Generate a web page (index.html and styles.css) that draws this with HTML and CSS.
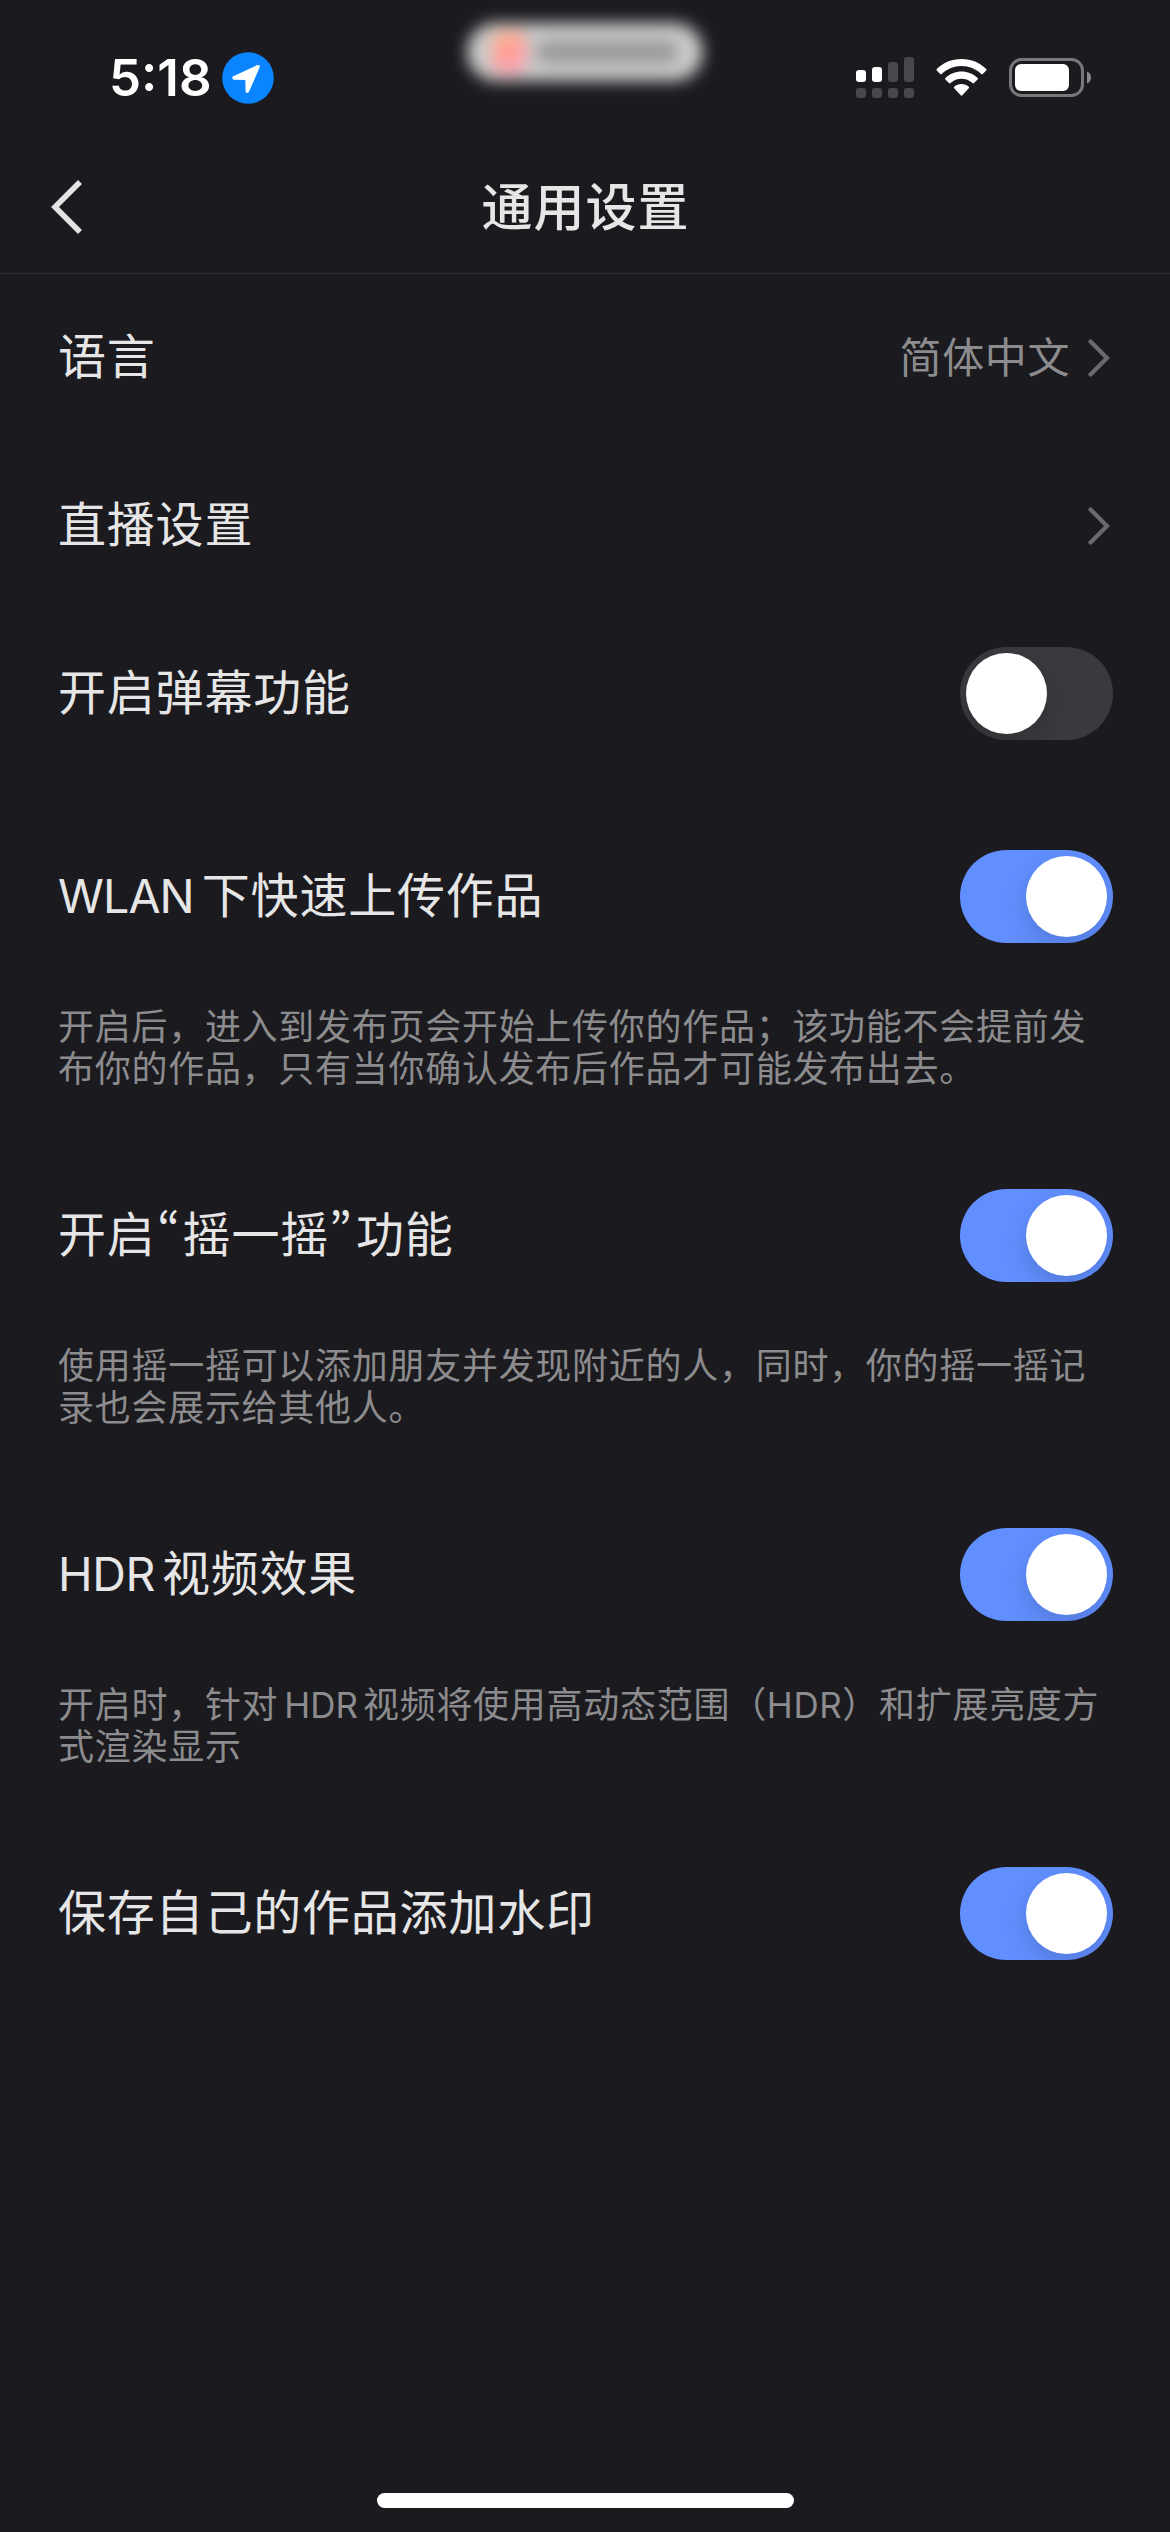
FILE: index.html
```html
<!DOCTYPE html>
<html lang="zh-CN">
<head>
<meta charset="utf-8">
<title>通用设置</title>
<link rel="stylesheet" href="styles.css">
</head>
<body>
<div class="screen">
  <header class="top">
    <div class="status">
      <div class="clock">
        <span class="time">5:18</span>
        <svg class="location" width="52" height="52" viewBox="0 0 52 52">
          <circle cx="26" cy="26" r="25.8" fill="#0a84ff"/>
          <path d="M11.6 25.2 L35.6 14 Q37 13.6 36.7 15 L26 39.6 Q25.200 40.300 24.600 39.600 L24.300 26.900 L12 26.800 Q10.900 26 11.600 25.200 Z" fill="#fff" stroke="#fff" stroke-width="2" stroke-linejoin="round"/>
        </svg>
      </div>
      <div class="island"><span class="island-icon"></span><span class="island-text"></span></div>
      <div class="indicators">
        <svg class="signal" width="58" height="42" viewBox="0 0 58 42">
          <g fill="#fff"><rect x="0" y="13" width="10" height="12" rx="3"/><rect x="16" y="10" width="10" height="15" rx="3"/></g>
          <g fill="#48474c"><rect x="32" y="5" width="10" height="20" rx="3"/><rect x="48" y="0" width="10" height="25" rx="3"/>
          <rect x="0" y="31" width="10" height="10" rx="3"/><rect x="16" y="31" width="10" height="10" rx="3"/><rect x="32" y="31" width="10" height="10" rx="3"/><rect x="48" y="31" width="10" height="10" rx="3"/></g>
        </svg>
        <svg class="wifi" width="51" height="38" viewBox="0 0 51 38">
          <g fill="#fff">
            <path d="M25.500 0 C35.500 0 43.600 3.700 50.200 9.900 Q51 10.700 50.200 11.500 L46.800 15 Q46 15.700 45.200 15 C39.700 9.900 33 7.100 25.500 7.100 C18 7.100 11.300 9.900 5.800 15 Q5 15.700 4.200 15 L.8 11.500 Q0 10.700 .8 9.900 C7.400 3.700 15.500 0 25.500 0Z"/>
            <path d="M25.500 12.500 C31.500 12.500 37.300 14.800 41.600 18.900 Q42.400 19.700 41.600 20.500 L38 24.100 Q37.300 24.800 36.500 24.100 C33.400 21.300 29.600 19.800 25.500 19.800 C21.400 19.800 17.600 21.300 14.500 24.100 Q13.700 24.800 13 24.100 L9.400 20.500 Q8.600 19.700 9.400 18.900 C13.700 14.800 19.500 12.500 25.500 12.500Z"/>
            <path d="M25.500 25 C28.200 25 30.800 26 32.800 27.700 Q33.600 28.500 32.800 29.300 L26.300 36.300 Q25.500 37.100 24.700 36.300 L18.200 29.300 Q17.400 28.500 18.200 27.700 C20.200 26 22.800 25 25.500 25Z"/>
          </g>
        </svg>
        <svg class="battery" width="83" height="39" viewBox="0 0 83 39">
          <rect x="1.500" y="1.500" width="72" height="36" rx="11" fill="none" stroke="#78777a" stroke-width="3"/>
          <rect x="6" y="6" width="54" height="27" rx="6" fill="#fff"/>
          <path d="M78 13.500 C80.500 14.500 82 16.800 82 19.500 C82 22.200 80.500 24.500 78 25.500Z" fill="#8b8a8d"/>
        </svg>
      </div>
    </div>
    <nav class="navbar">
      <svg class="back" width="32" height="54" viewBox="0 0 32 54"><path d="M29 2 L4 27 L29 52" fill="none" stroke="#e5e4e5" stroke-width="5.600"/></svg>
      <h1 class="title">通用设置</h1>
    </nav>
  </header>

  <main class="list">
    <div class="row">
      <span class="label">语言</span>
      <span class="value"><span class="value-text">简体中文</span><svg class="chevron" width="22" height="38" viewBox="0 0 22 38"><path d="M2.500 2.500 L19 19 L2.500 35.500" fill="none" stroke="#6a696d" stroke-width="4.200" stroke-linecap="round"/></svg></span>
    </div>
    <div class="row">
      <span class="label">直播设置</span>
      <span class="value"><svg class="chevron" width="22" height="38" viewBox="0 0 22 38"><path d="M2.500 2.500 L19 19 L2.500 35.500" fill="none" stroke="#6a696d" stroke-width="4.200" stroke-linecap="round"/></svg></span>
    </div>
    <div class="row">
      <span class="label">开启弹幕功能</span>
      <span class="toggle"><span class="knob"></span></span>
    </div>

    <section class="group">
      <div class="row">
        <span class="label"><span class="latin wlan">WLAN</span>下快速上传作品</span>
        <span class="toggle on"><span class="knob"></span></span>
      </div>
      <p class="hint">开启后，进入到发布页会开始上传你的作品；该功能不会提前发<br>布你的作品，只有当你确认发布后作品才可能发布出去。</p>
    </section>
    <section class="group">
      <div class="row">
        <span class="label">开启<span class="quote">“</span>摇一摇<span class="quote close">”</span>功能</span>
        <span class="toggle on"><span class="knob"></span></span>
      </div>
      <p class="hint">使用摇一摇可以添加朋友并发现附近的人，同时，你的摇一摇记<br>录也会展示给其他人。</p>
    </section>
    <section class="group">
      <div class="row">
        <span class="label"><span class="latin hdr">HDR</span>视频效果</span>
        <span class="toggle on"><span class="knob"></span></span>
      </div>
      <p class="hint">开启时，针对<span class="latin spaced">HDR</span>视频将使用高动态范围（<span class="latin enclosed">HDR</span>）和扩展亮度方<br>式渲染显示</p>
    </section>
    <section class="group">
      <div class="row">
        <span class="label">保存自己的作品添加水印</span>
        <span class="toggle on"><span class="knob"></span></span>
      </div>
    </section>
  </main>
  <footer class="home"><span class="home-bar"></span></footer>
</div>
</body>
</html>
```
FILE: styles.css
```css
* { box-sizing: border-box; }
body { margin: 0; background: #1b1a1f; }
.screen {
  display: flex;
  flex-direction: column;
  width: 1170px;
  height: 2532px;
  overflow: hidden;
  background: #1b1a1f;
  color: #e6e6e6;
  font-family: "Noto Sans CJK SC", sans-serif;
}
.top { height: 274px; border-bottom: 1px solid #2d2c31; }

.status {
  display: grid;
  grid-template-columns: 1fr 240px 1fr;
  height: 141px;
}
.clock {
  display: flex;
  align-items: flex-start;
  padding: 52px 0 0 109px;
}
.time {
  width: 113px;
  font: 600 51px/52px Inter, sans-serif;
  color: #fff;
  letter-spacing: 0;
}
.island {
  display: flex;
  align-items: center;
  gap: 10px;
  height: 58px;
  margin: 23px 2px 0;
  padding: 0 25px;
  border-radius: 29px;
  background: #cdcdcd;
  filter: blur(8px);
}
.island-icon { width: 34px; height: 42px; border-radius: 10px; background: linear-gradient(150deg, #ffc48c, #ff9c94 45%, #ffa4bc); }
.island-text { flex: 1; height: 22px; border-radius: 8px; background: #989898; }
.indicators {
  display: flex;
  align-items: flex-start;
  padding: 57px 0 0 151px;
}
.wifi { margin: 2px 0 0 22px; }
.battery { margin: 1px 0 0 22px; }

.navbar {
  display: grid;
  grid-template-columns: 100px 1fr 100px;
  align-items: center;
  height: 132px;
}
.back { margin-left: 51px; }
.title {
  margin: 0;
  padding: 0 0 7px 1px;
  font-size: 51px;
  line-height: 60px;
  font-weight: 500;
  letter-spacing: 1px;
  text-align: center;
}

.list { flex: 1; }
.row {
  display: flex;
  align-items: center;
  justify-content: space-between;
  height: 167px;
  margin: 0 57px 1px 58px;
}
.label {
  padding-bottom: 9px;
  font-size: 48px;
  line-height: 60px;
  letter-spacing: .8px;
  white-space: nowrap;
}
.latin {
  font-family: Inter, sans-serif;
  font-size: .97em;
  line-height: 0;
  letter-spacing: 0;
}
.wlan { margin-right: 8px; letter-spacing: -.9px; }
.hdr { margin-right: 7px; letter-spacing: -.4px; }
.spaced { margin: 0 5px 0 6px; }
.enclosed { letter-spacing: .6px; }
.quote {
  display: inline-block;
  width: 27px;
  line-height: 60px;
  text-align: center;
  font-feature-settings: "pwid";
}
.close { text-align: left; }
.value {
  display: flex;
  align-items: center;
}
.value-text {
  padding-bottom: 6px;
  font-size: 42px;
  line-height: 60px;
  letter-spacing: .6px;
  color: #8c8c8e;
}
.chevron { margin: 0 3px 0 18px; }

.toggle {
  display: flex;
  width: 153px;
  height: 93px;
  padding: 6px;
  border-radius: 47px;
  background: #3a393e;
  overflow: hidden;
}
.toggle.on { justify-content: flex-end; background: #618fff; }
.knob {
  width: 81px;
  height: 81px;
  border-radius: 50%;
  background: #fff;
  box-shadow: 0 9px 24px rgba(0, 0, 0, .15);
}

.group { height: 339px; }
.group:nth-of-type(1) { margin-top: 36px; }
.hint {
  margin: 23px 58px 0;
  font-size: 36px;
  line-height: 42px;
  letter-spacing: .72px;
  white-space: nowrap;
  color: #8c8c8e;
}

.home { display: flex; justify-content: center; height: 39px; }
.home-bar { width: 417px; height: 15px; border-radius: 8px; background: #fff; }
```
